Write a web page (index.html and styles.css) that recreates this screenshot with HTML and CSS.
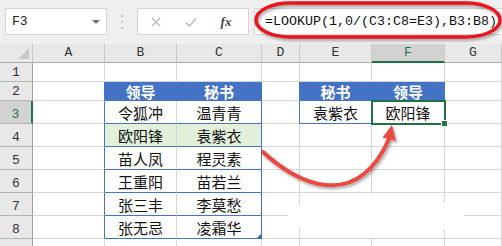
FILE: index.html
```html
<!DOCTYPE html>
<html>
<head>
<meta charset="utf-8">
<link rel="stylesheet" href="styles.css">
</head>
<body>
<div class="app">
  <div class="fbar">
    <div class="namebox"><span>F3</span><span class="dd"></span></div>
    <div class="grip"><svg width="4" height="16" viewBox="0 0 4 16"><rect x="1" y="1" width="2" height="2" fill="#c4c4c4"/><rect x="1" y="7" width="2" height="2" fill="#c4c4c4"/><rect x="1" y="13" width="2" height="2" fill="#c4c4c4"/></svg></div>
    <div class="fbtns">
      <svg class="ic" width="14" height="14" viewBox="0 0 14 14"><path d="M3 3 L11 11 M11 3 L3 11" stroke="#b9b9b9" stroke-width="1.3" fill="none"/></svg>
      <svg class="ic" width="14" height="14" viewBox="0 0 14 14"><path d="M2 7.5 L5.5 11 L12 3.5" stroke="#b9b9b9" stroke-width="1.5" fill="none"/></svg>
      <span class="fx">fx</span>
    </div>
    <div class="finput">=LOOKUP(1,0/(C3:C8=E3),B3:B8)</div>
  </div>
  <div class="sheet">
    <div class="c ch corner"><svg width="12" height="12" viewBox="0 0 12 12"><polygon points="11,0 11,11 0,11" fill="#c9c9c9"/></svg></div>
    <div class="c ch">A</div><div class="c ch">B</div><div class="c ch">C</div><div class="c ch">D</div><div class="c ch">E</div><div class="c ch sel">F</div><div class="c ch">G</div>

    <div class="c rh">1</div><div class="c"></div><div class="c"></div><div class="c"></div><div class="c"></div><div class="c"></div><div class="c"></div><div class="c"></div>

    <div class="c rh">2</div><div class="c bl"></div><div class="c th">领导</div><div class="c th">秘书</div><div class="c bl"></div><div class="c th">秘书</div><div class="c th">领导</div><div class="c"></div>

    <div class="c rh rsel">3</div><div class="c bl"></div><div class="c bb">令狐冲</div><div class="c bb br">温青青</div><div class="c bl"></div><div class="c bb">袁紫衣</div><div class="c bb active">欧阳锋</div><div class="c"></div>

    <div class="c rh">4</div><div class="c bl"></div><div class="c bb hl">欧阳锋</div><div class="c bb br hl">袁紫衣</div><div class="c"></div><div class="c"></div><div class="c"></div><div class="c"></div>

    <div class="c rh">5</div><div class="c bl"></div><div class="c bb">苗人凤</div><div class="c bb br">程灵素</div><div class="c"></div><div class="c"></div><div class="c"></div><div class="c"></div>

    <div class="c rh">6</div><div class="c bl"></div><div class="c bb">王重阳</div><div class="c bb br">苗若兰</div><div class="c"></div><div class="c"></div><div class="c"></div><div class="c"></div>

    <div class="c rh">7</div><div class="c bl"></div><div class="c bb">张三丰</div><div class="c bb br">李莫愁</div><div class="c"></div><div class="c"></div><div class="c"></div><div class="c"></div>

    <div class="c rh">8</div><div class="c bl"></div><div class="c bb">张无忌</div><div class="c bb br tend">凌霜华</div><div class="c"></div><div class="c"></div><div class="c"></div><div class="c"></div>

    <div class="c rh"></div><div class="c"></div><div class="c"></div><div class="c"></div><div class="c"></div><div class="c"></div><div class="c"></div><div class="c"></div>
  </div>
  <svg class="annot" width="502" height="246" viewBox="0 0 502 246">
    <defs>
      <filter id="sh" x="-10%" y="-20%" width="120%" height="150%">
        <feDropShadow dx="1.5" dy="2" stdDeviation="1.5" flood-color="#000" flood-opacity="0.35"/>
      </filter>
    </defs>
    <ellipse cx="376" cy="216" rx="88" ry="22" fill="#fff"/>
    <rect x="256" y="3" width="244" height="34" rx="34" ry="17" fill="none" stroke="#e8161b" stroke-width="3.5" filter="url(#sh)"/>
    <g filter="url(#sh)">
      <path d="M263,152 C294,181 355,215 389,139" fill="none" stroke="#e84a40" stroke-width="4" stroke-linecap="round"/>
      <polygon points="392,125 396,141 382.5,137.5" fill="#e84a40"/>
    </g>
  </svg>
</div>
</body>
</html>
```

FILE: styles.css
```css
html, body {
  margin: 0;
  padding: 0;
  background: #fff;
}
body {
  width: 502px;
  height: 246px;
  overflow: hidden;
  font-family: "Noto Sans CJK SC", sans-serif;
}
.app {
  position: relative;
  width: 502px;
  height: 246px;
  overflow: hidden;
}
.fbar {
  height: 44px;
  box-sizing: border-box;
  padding-top: 8px;
  background: #efefef;
  display: flex;
  align-items: flex-start;
}
.namebox {
  margin-left: 5px;
  width: 102px;
  height: 27px;
  box-sizing: border-box;
  background: #fff;
  border: 1px solid #d5d5d5;
  display: flex;
  align-items: center;
  justify-content: space-between;
  padding: 0 6px;
  font: 13px "Liberation Mono", monospace;
  color: #222;
}
.dd {
  width: 0;
  height: 0;
  border-left: 4px solid transparent;
  border-right: 4px solid transparent;
  border-top: 4px solid #707070;
}
.grip {
  width: 30px;
  height: 27px;
  display: flex;
  align-items: center;
  justify-content: center;
}
.fbtns {
  width: 112px;
  height: 27px;
  box-sizing: border-box;
  background: #fff;
  border: 1px solid #d5d5d5;
  display: flex;
  align-items: center;
  padding-left: 11px;
  gap: 21px;
}
.ic {
  display: block;
}
.fx {
  width: 14px;
  font: italic bold 13px "Liberation Serif", serif;
  color: #444;
  text-align: center;
}
.finput {
  margin-left: 5px;
  flex: 1;
  height: 27px;
  box-sizing: border-box;
  background: #fff;
  border: 1px solid #d5d5d5;
  border-right: none;
  padding-left: 10px;
  font: 13.33px/25px "Liberation Mono", monospace;
  color: #111;
  white-space: nowrap;
}
.sheet {
  display: grid;
  grid-template-columns: 33px 72px 72px 85px 38px 72px 73px 57px;
  grid-template-rows: 19px 19px 19px repeat(7, 23px);
}
.c {
  box-sizing: border-box;
  border-right: 1px solid #d6d6d6;
  border-bottom: 1px solid #d6d6d6;
  display: flex;
  align-items: center;
  justify-content: center;
  font-size: 15px;
  line-height: 1;
  color: #111;
  white-space: nowrap;
}
.ch {
  background: #e8e8e8;
  border-right-color: #c8c8c8;
  border-bottom-color: #ababab;
  font: 13px/1 "Liberation Mono", monospace;
  color: #333;
  align-items: flex-end;
  padding-bottom: 3px;
}
.corner {
  justify-content: flex-end;
  padding: 0 2px 2px 0;
}
.ch.sel {
  background: #d2d2d2;
  color: #217346;
  border-bottom: 2px solid #217346;
  padding-bottom: 2px;
}
.rh {
  background: #e8e8e8;
  border-right-color: #9f9f9f;
  border-bottom-color: #b4b4b4;
  font: 13px/1 "Liberation Mono", monospace;
  color: #333;
  align-items: flex-end;
  padding-bottom: 2px;
}
.rh.rsel {
  background: #d2d2d2;
  color: #217346;
  border-right: 2px solid #217346;
}
.th {
  background: #4472c4;
  border-color: #4472c4;
  color: #fff;
  font-weight: bold;
}
.bl {
  border-right-color: #4472c4;
}
.bb {
  border-bottom-color: #4472c4;
}
.br {
  border-right-color: #4472c4;
}
.hl {
  background: #e2efda;
}
.active {
  position: relative;
  outline: 2px solid #217346;
  outline-offset: -1px;
  z-index: 1;
}
.active::after {
  content: "";
  position: absolute;
  right: -4px;
  bottom: -4px;
  width: 5px;
  height: 5px;
  background: #217346;
  border: 1px solid #fff;
}
.tend {
  position: relative;
}
.tend::after {
  content: "";
  position: absolute;
  right: 0;
  bottom: 0;
  width: 0;
  height: 0;
  border-left: 4px solid transparent;
  border-bottom: 4px solid #3a5fb0;
}
.annot {
  position: absolute;
  left: 0;
  top: 0;
  pointer-events: none;
}
```
